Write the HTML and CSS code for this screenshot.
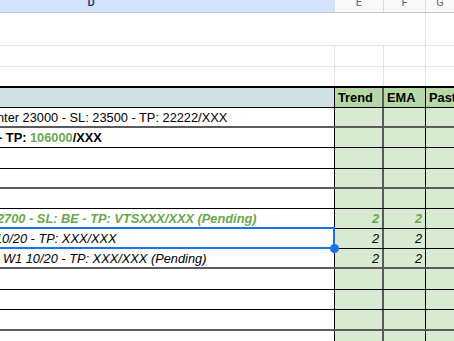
FILE: index.html
```html
<!DOCTYPE html>
<html lang="en">
<head>
    <meta charset="UTF-8">
    <meta name="viewport" content="width=device-width, initial-scale=1.0">
    <title>Trades sheet</title>
    <link rel="stylesheet" href="styles.css">
</head>
<body>
    <div class="sheet">
        <div class="row colheads">
            <div class="cell col-sel">D</div>
            <div class="cell">E</div>
            <div class="cell">F</div>
            <div class="cell">G</div>
        </div>

        <div class="row light tall">
            <div class="cell wide"></div>
            <div class="cell last"></div>
        </div>
        <div class="row light h21">
            <div class="cell"></div><div class="cell"></div><div class="cell"></div><div class="cell"></div>
        </div>
        <div class="row sep h21">
            <div class="cell"></div><div class="cell"></div><div class="cell"></div><div class="cell"></div>
        </div>

        <div class="row head">
            <div class="cell"></div>
            <div class="cell ind">Trend</div>
            <div class="cell ind">EMA</div>
            <div class="cell ind">Past</div>
        </div>

        <div class="row gray">
            <div class="cell"><span class="txt off3">nter 23000 - SL: 23500 - TP: 22222/XXX</span></div>
            <div class="cell ind"></div><div class="cell ind"></div><div class="cell ind"></div>
        </div>
        <div class="row">
            <div class="cell"><span class="txt off2 bold">- TP: <span class="green">106000</span>/XXX</span></div>
            <div class="cell ind"></div><div class="cell ind"></div><div class="cell ind"></div>
        </div>
        <div class="row h21">
            <div class="cell"></div>
            <div class="cell ind"></div><div class="cell ind"></div><div class="cell ind"></div>
        </div>
        <div class="row gray">
            <div class="cell"></div>
            <div class="cell ind"></div><div class="cell ind"></div><div class="cell ind"></div>
        </div>
        <div class="row">
            <div class="cell"></div>
            <div class="cell ind"></div><div class="cell ind"></div><div class="cell ind"></div>
        </div>
        <div class="row">
            <div class="cell"><span class="txt off6 bold italic green">2700 - SL: BE - TP: VTSXXX/XXX (Pending)</span></div>
            <div class="cell ind num bold italic green">2</div>
            <div class="cell ind num bold italic green">2</div>
            <div class="cell ind"></div>
        </div>
        <div class="row">
            <div class="cell selected">
                <span class="txt off5 italic">10/20 - TP: XXX/XXX</span>
                <span class="sel-box"></span>
                <span class="sel-handle"></span>
            </div>
            <div class="cell ind num italic">2</div>
            <div class="cell ind num italic">2</div>
            <div class="cell ind"></div>
        </div>
        <div class="row gray">
            <div class="cell"><span class="txt on3 italic">W1 10/20 - TP: XXX/XXX (Pending)</span></div>
            <div class="cell ind num italic">2</div>
            <div class="cell ind num italic">2</div>
            <div class="cell ind"></div>
        </div>
        <div class="row h21">
            <div class="cell"></div>
            <div class="cell ind"></div><div class="cell ind"></div><div class="cell ind"></div>
        </div>
        <div class="row">
            <div class="cell"></div>
            <div class="cell ind"></div><div class="cell ind"></div><div class="cell ind"></div>
        </div>
        <div class="row gray h21">
            <div class="cell"></div>
            <div class="cell ind"></div><div class="cell ind"></div><div class="cell ind"></div>
        </div>
        <div class="row">
            <div class="cell"></div>
            <div class="cell ind"></div><div class="cell ind"></div><div class="cell ind"></div>
        </div>
    </div>
</body>
</html>
```

FILE: styles.css
```css
body {
    margin: 0;
    padding: 0;
    background-color: #fff;
    font-family: "Liberation Sans", Arial, sans-serif;
    font-size: 12.8px;
    color: #000;
    overflow: hidden;
}
.sheet {
    width: 454px;
}
.row {
    display: grid;
    grid-template-columns: 335px 49px 42px 1fr;
    box-sizing: border-box;
    height: 20px;
    border-bottom: 1px solid #000;
}
.cell {
    position: relative;
    box-sizing: border-box;
    display: flex;
    align-items: center;
    padding: 0 3px;
    white-space: nowrap;
    border-right: 1px solid #000;
}
.cell:nth-child(2) {
    border-right: 2px solid #5a5a5a;
}
.cell:last-child {
    border-right: none;
}
.h21 {
    height: 21px;
}

/* column letters */
.colheads {
    height: 21px;
    margin-top: -8px;
    border-bottom: 1px solid #c4c7c5;
    font-family: Roboto, "Liberation Sans", sans-serif;
    font-size: 11px;
    color: #5f6368;
    background-color: #f8f9fa;
}
.colheads .cell {
    justify-content: center;
    border-right: 1px solid #dadce0;
}
.colheads .cell:last-child {
    border-right: none;
}
.colheads .col-sel {
    /* column D starts off screen to the left */
    padding-right: 155px;
    background-color: #d3e3fd;
    color: #0b2e6b;
    font-weight: 500;
}

/* empty rows above the table */
.light {
    border-bottom: 1px solid #e2e2e2;
}
.light .cell {
    border-right: 1px solid #e2e2e2;
}
.light .cell:last-child {
    border-right: none;
}
.tall {
    height: 33px;
    grid-template-columns: 426px 1fr;
}
.tall .wide {
    border-right: 1px solid #e2e2e2;
}
.sep {
    border-bottom: 2px solid #000;
}
.sep .cell {
    border-right: 1px solid #e2e2e2;
}
.sep .cell:last-child {
    border-right: none;
}

/* table header */
.head .cell:first-child {
    background-color: #d0e0e3;
}
.head .ind {
    background-color: #b6d7a8;
    font-weight: bold;
}
.ind {
    background-color: #d9ead3;
}
.gray {
    border-bottom: 2px solid #5a5a5a;
}

.txt {
    display: inline-block;
}
.off2 { margin-left: -5px; }
.off3 { margin-left: -6px; }
.off5 { margin-left: -8px; }
.off6 { margin-left: -6px; }
.on3 { margin-left: 0; }

.num {
    justify-content: flex-end;
}
.bold {
    font-weight: bold;
}
.italic {
    font-style: italic;
}
.green {
    color: #6aa84f;
}

/* selected cell */
.sel-box {
    position: absolute;
    top: -2px;
    left: -4px;
    right: -1px;
    bottom: -1px;
    border: 2px solid #1a73e8;
}
.sel-handle {
    position: absolute;
    right: -5px;
    bottom: -5px;
    width: 9px;
    height: 9px;
    border-radius: 50%;
    background-color: #1a73e8;
    z-index: 1;
}
```
